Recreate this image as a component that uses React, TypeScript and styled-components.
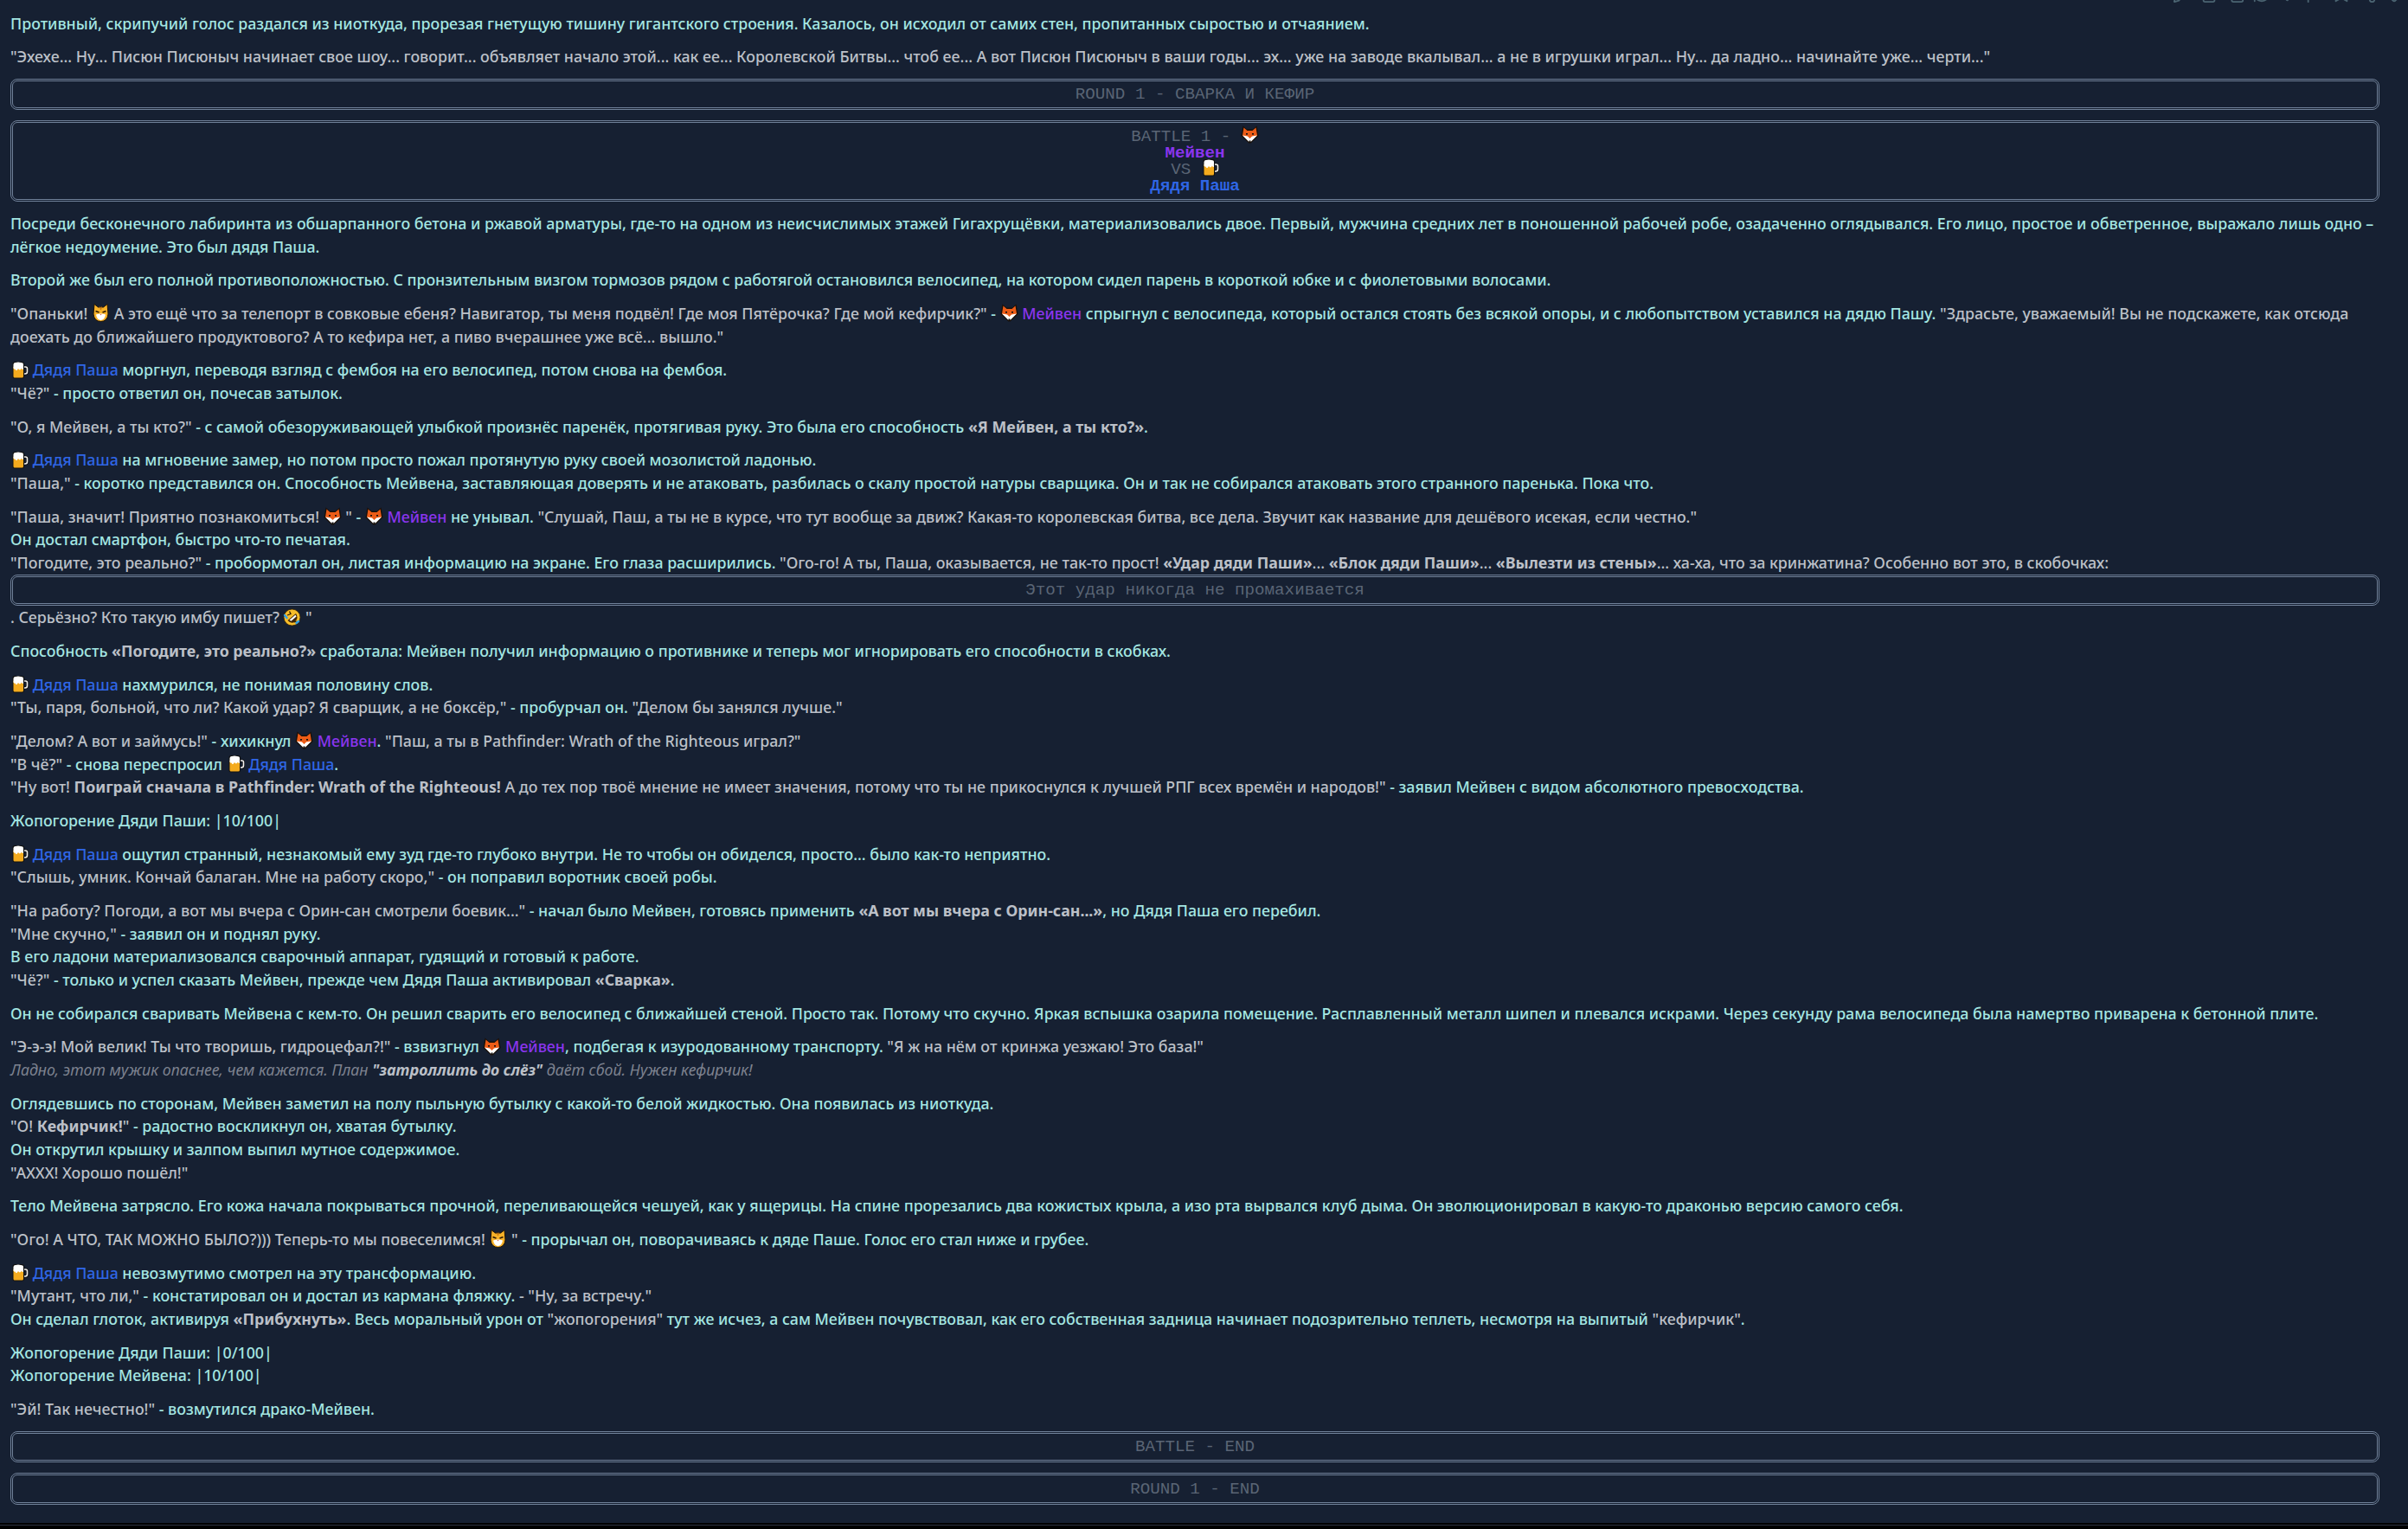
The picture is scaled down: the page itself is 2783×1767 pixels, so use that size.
import React from "react";
import styled, { createGlobalStyle } from "styled-components";
import { Reply, Pencil, Trash2, Copy, RefreshCw, Volume2, Flag, Bookmark, Share2, Heart } from "lucide-react";

const Global = createGlobalStyle`
  html, body { margin: 0; padding: 0; background: #000; }
  body { font-family: "Noto Sans", "Open Sans", sans-serif; }
`;

const Viewport = styled.div`
  height: 1767px;
  display: flex;
  flex-direction: column;
  overflow: hidden;
  background: #000;
`;
const Chat = styled.main`
  flex: 1;
  min-height: 0;
  overflow: hidden;
  background: #162032;
  padding: 0 33px 0 12px;
`;
const Foot = styled.footer`
  height: 7px;
  padding-top: 2px;
  box-sizing: border-box;
  &::before {
    content: "";
    display: block;
    height: 1px;
    background: #2c3240;
  }
`;
const MessageHead = styled.header`
  display: flex;
  justify-content: space-between;
  align-items: flex-end;
  height: 27px;
  margin: -23px -28px 9.6px 0;
  color: #a2e6e2;
`;
const Author = styled.div`
  font-weight: 700;
  font-size: 15px;
  line-height: 27px;
  span { font-weight: 400; font-size: 12px; color: #5d6b7c; margin-left: 7px; }
`;
const Tools = styled.div`
  display: flex;
  gap: 8.6px;
  color: #4b6472;
  svg { width: 22px; height: 22px; }
`;
const P = styled.p<{ $flush?: boolean }>`
  margin: 0 0 ${(p) => (p.$flush ? "0" : "12px")};
  font-size: 17.78px;
  line-height: 26.67px;
  font-weight: 500;
  color: #a4e6e2;
`;
const Q = styled.span`
  color: #bcc0c8;
`;
const Thought = styled.em`
  color: #7d828f;
  font-weight: 400;
  b { color: #bcc0c8; font-weight: 700; }
`;
const Name = styled.span<{ $who: "m" | "p" }>`
  color: ${(p) => (p.$who === "m" ? "#8a35ee" : "#2f66e6")};
`;
const Block = styled.div<{ $tight?: boolean }>`
  border: 3px double #708199;
  border-radius: 8px;
  margin: 0 0 ${(p) => (p.$tight ? "0" : "12px")};
  font-family: "Liberation Mono", monospace;
  font-size: 19.2px;
  line-height: 19px;
  color: #5a6575;
  text-align: center;
  padding: 6.5px 0 5px;
`;
const BattleLine = styled.div`
  height: 19px;
`;
const MonoName = styled.b<{ $who: "m" | "p" }>`
  color: ${(p) => (p.$who === "m" ? "#8a35ee" : "#2f66e6")};
`;
const EmojiBox = styled.svg`
  display: inline-block;
  width: 21px;
  height: 21px;
  margin-top: -6px;
  vertical-align: -3.5px;
`;

const Fox = () => (
  <EmojiBox viewBox="0 0 21 21">
    <path d="M2.5 0.5 L7 4.5 H14 L18.5 0.5 L20.5 12 L11.5 20.5 H9.5 L0.5 12 Z" fill="#1a1008" />
    <path d="M3.5 2.5 L7.5 6 H13.5 L17.5 2.5 L19 11.5 L10.5 18 L2 11.5 Z" fill="#ec5c17" />
    <path d="M2 11.5 L8 12.5 L10.5 15 L13 12.5 L19 11.5 L12 18.5 H9 Z" fill="#fff" />
    <path d="M9.3 17.5 H11.7 L10.5 20 Z" fill="#111" />
    <rect x="6" y="9" width="2" height="1.6" fill="#111" />
    <rect x="13" y="9" width="2" height="1.6" fill="#111" />
  </EmojiBox>
);
const Beer = () => (
  <EmojiBox viewBox="0 0 21 21">
    <path d="M14 7 H17.5 Q19.5 7 19.5 9 V12.5 Q19.5 15 17 15 H14" fill="none" stroke="#111" strokeWidth="3.2" />
    <path d="M14 7 H17.5 Q19.5 7 19.5 9 V12.5 Q19.5 15 17 15 H14" fill="none" stroke="#f1f1f1" strokeWidth="1.6" />
    <rect x="2.5" y="1" width="13.5" height="19.5" rx="2.5" fill="#111" />
    <rect x="3.5" y="6" width="11.5" height="13.5" rx="1.5" fill="#f4ab1e" />
    <path d="M3.5 4 Q4 1.8 6 2 Q9 0.8 12 2 Q15 2 15 4 V9.5 Q13.8 11 13 8.5 Q11 12 9 9 Q7 13 5.5 9.5 Q4 10 3.5 8.5 Z" fill="#fff" />
  </EmojiBox>
);
const Cat = () => (
  <EmojiBox viewBox="0 0 21 21">
    <path d="M3 0.5 L7.5 4 H13.5 L18 0.5 L19 12 Q18 20.5 10.5 20.5 Q3 20.5 2 12 Z" fill="#f6b128" stroke="#1d1205" strokeWidth="1" />
    <path d="M5 12.5 Q10.5 10.5 16 12.5 Q15 18.5 10.5 19 Q6 18.5 5 12.5 Z" fill="#fff" />
    <path d="M4.5 8.5 L8.5 10 M16.5 8.5 L12.5 10" stroke="#2d1a03" strokeWidth="1.7" />
    <path d="M9.5 12 H11.5 L10.5 13.5 Z" fill="#e0644a" />
    <path d="M9.5 3.5 L10.5 7 L11.5 3.5" stroke="#c9760f" strokeWidth="1" fill="none" />
  </EmojiBox>
);
const Rofl = () => (
  <EmojiBox viewBox="0 0 21 21">
    <circle cx="10.5" cy="10.5" r="9.5" fill="#f7bd2a" stroke="#3a2605" strokeWidth=".8" />
    <path d="M5.5 14 L15 6 Q18.5 11 14 15.5 Q9.5 18.5 5.5 14 Z" fill="#3e2405" />
    <path d="M7.5 13.5 L14.5 7.5 L15.5 9.5 L9.5 14.8 Z" fill="#fff" />
    <path d="M5 8 L9 6.5 L7.5 3.5 M13 16 L16 15" stroke="#2d1a03" strokeWidth="1.3" fill="none" />
    <path d="M2 8 L4.5 11 M15.5 17 L18 15" stroke="#2f9fe8" strokeWidth="2.4" strokeLinecap="round" />
  </EmojiBox>
);

const M = () => (<><Fox /> <Name $who="m">Мейвен</Name></>);
const D = () => (<><Beer /> <Name $who="p">Дядя Паша</Name></>);

export default function App() {
  return (
    <Viewport>
      <Global />
      <Chat>
        <MessageHead>
          <Author>PET Arena<span>July 14, 2025 2:10 PM</span></Author>
          <Tools>
            <Reply /><Pencil /><Trash2 /><Copy /><RefreshCw /><Volume2 /><Flag /><Bookmark /><Share2 /><Heart />
          </Tools>
        </MessageHead>
        <P>Противный, скрипучий голос раздался из ниоткуда, прорезая гнетущую тишину гигантского строения. Казалось, он исходил от самих стен, пропитанных сыростью и отчаянием.</P>
        <P><Q>"Эхехе... Ну... Писюн Писюныч начинает свое шоу... говорит... объявляет начало этой... как ее... Королевской Битвы... чтоб ее... А вот Писюн Писюныч в ваши годы... эх... уже на заводе вкалывал... а не в игрушки играл... Ну... да ладно... начинайте уже... черти..."</Q></P>
        <Block>ROUND 1 - СВАРКА И КЕФИР</Block>
        <Block>
          <BattleLine>BATTLE 1 - <Fox /></BattleLine>
          <BattleLine><MonoName $who="m">Мейвен</MonoName></BattleLine>
          <BattleLine>VS <Beer /></BattleLine>
          <BattleLine><MonoName $who="p">Дядя Паша</MonoName></BattleLine>
        </Block>
        <P>Посреди бесконечного лабиринта из обшарпанного бетона и ржавой арматуры, где-то на одном из неисчислимых этажей Гигахрущёвки, материализовались двое. Первый, мужчина средних лет в поношенной рабочей робе, озадаченно оглядывался. Его лицо, простое и обветренное, выражало лишь одно – лёгкое недоумение. Это был дядя Паша.</P>
        <P>Второй же был его полной противоположностью. С пронзительным визгом тормозов рядом с работягой остановился велосипед, на котором сидел парень в короткой юбке и с фиолетовыми волосами.</P>
        <P><Q>"Опаньки! <Cat /> А это ещё что за телепорт в совковые ебеня? Навигатор, ты меня подвёл! Где моя Пятёрочка? Где мой кефирчик?"</Q> - <M /> спрыгнул с велосипеда, который остался стоять без всякой опоры, и с любопытством уставился на дядю Пашу. <Q>"Здрасьте, уважаемый! Вы не подскажете, как отсюда доехать до ближайшего продуктового? А то кефира нет, а пиво вчерашнее уже всё... вышло."</Q></P>
        <P><D /> моргнул, переводя взгляд с фембоя на его велосипед, потом снова на фембоя.<br /><Q>"Чё?"</Q> - просто ответил он, почесав затылок.</P>
        <P><Q>"О, я Мейвен, а ты кто?"</Q> - с самой обезоруживающей улыбкой произнёс паренёк, протягивая руку. Это была его способность <Q><b>«Я Мейвен, а ты кто?»</b></Q>.</P>
        <P><D /> на мгновение замер, но потом просто пожал протянутую руку своей мозолистой ладонью.<br /><Q>"Паша,"</Q> - коротко представился он. Способность Мейвена, заставляющая доверять и не атаковать, разбилась о скалу простой натуры сварщика. Он и так не собирался атаковать этого странного паренька. Пока что.</P>
        <P $flush><Q>"Паша, значит! Приятно познакомиться! <Fox /> "</Q> - <M /> не унывал. <Q>"Слушай, Паш, а ты не в курсе, что тут вообще за движ? Какая-то королевская битва, все дела. Звучит как название для дешёвого исекая, если честно."</Q><br />Он достал смартфон, быстро что-то печатая.<br /><Q>"Погодите, это реально?"</Q> - пробормотал он, листая информацию на экране. Его глаза расширились. <Q>"Ого-го! А ты, Паша, оказывается, не так-то прост! <b>«Удар дяди Паши»</b>... <b>«Блок дяди Паши»</b>... <b>«Вылезти из стены»</b>... ха-ха, что за кринжатина? Особенно вот это, в скобочках:</Q></P>
        <Block $tight>Этот удар никогда не промахивается</Block>
        <P><Q>. Серьёзно? Кто такую имбу пишет? <Rofl /> "</Q></P>
        <P>Способность <Q><b>«Погодите, это реально?»</b></Q> сработала: Мейвен получил информацию о противнике и теперь мог игнорировать его способности в скобках.</P>
        <P><D /> нахмурился, не понимая половину слов.<br /><Q>"Ты, паря, больной, что ли? Какой удар? Я сварщик, а не боксёр,"</Q> - пробурчал он. <Q>"Делом бы занялся лучше."</Q></P>
        <P><Q>"Делом? А вот и займусь!"</Q> - хихикнул <M />. <Q>"Паш, а ты в Pathfinder: Wrath of the Righteous играл?"</Q><br /><Q>"В чё?"</Q> - снова переспросил <D />.<br /><Q>"Ну вот! <b>Поиграй сначала в Pathfinder: Wrath of the Righteous!</b> А до тех пор твоё мнение не имеет значения, потому что ты не прикоснулся к лучшей РПГ всех времён и народов!"</Q> - заявил Мейвен с видом абсолютного превосходства.</P>
        <P>Жопогорение Дяди Паши: |10/100|</P>
        <P><D /> ощутил странный, незнакомый ему зуд где-то глубоко внутри. Не то чтобы он обиделся, просто... было как-то неприятно.<br /><Q>"Слышь, умник. Кончай балаган. Мне на работу скоро,"</Q> - он поправил воротник своей робы.</P>
        <P><Q>"На работу? Погоди, а вот мы вчера с Орин-сан смотрели боевик..."</Q> - начал было Мейвен, готовясь применить <Q><b>«А вот мы вчера с Орин-сан...»</b></Q>, но Дядя Паша его перебил.<br /><Q>"Мне скучно,"</Q> - заявил он и поднял руку.<br />В его ладони материализовался сварочный аппарат, гудящий и готовый к работе.<br /><Q>"Чё?"</Q> - только и успел сказать Мейвен, прежде чем Дядя Паша активировал <Q><b>«Сварка»</b></Q>.</P>
        <P>Он не собирался сваривать Мейвена с кем-то. Он решил сварить его велосипед с ближайшей стеной. Просто так. Потому что скучно. Яркая вспышка озарила помещение. Расплавленный металл шипел и плевался искрами. Через секунду рама велосипеда была намертво приварена к бетонной плите.</P>
        <P><Q>"Э-э-э! Мой велик! Ты что творишь, гидроцефал?!"</Q> - взвизгнул <M />, подбегая к изуродованному транспорту. <Q>"Я ж на нём от кринжа уезжаю! Это база!"</Q><br /><Thought>Ладно, этот мужик опаснее, чем кажется. План <b>"затроллить до слёз"</b> даёт сбой. Нужен кефирчик!</Thought></P>
        <P>Оглядевшись по сторонам, Мейвен заметил на полу пыльную бутылку с какой-то белой жидкостью. Она появилась из ниоткуда.<br /><Q>"О! <b>Кефирчик!</b>"</Q> - радостно воскликнул он, хватая бутылку.<br />Он открутил крышку и залпом выпил мутное содержимое.<br /><Q>"АХХХ! Хорошо пошёл!"</Q></P>
        <P>Тело Мейвена затрясло. Его кожа начала покрываться прочной, переливающейся чешуей, как у ящерицы. На спине прорезались два кожистых крыла, а изо рта вырвался клуб дыма. Он эволюционировал в какую-то драконью версию самого себя.</P>
        <P><Q>"Ого! А ЧТО, ТАК МОЖНО БЫЛО?))) Теперь-то мы повеселимся! <Cat /> "</Q> - прорычал он, поворачиваясь к дяде Паше. Голос его стал ниже и грубее.</P>
        <P><D /> невозмутимо смотрел на эту трансформацию.<br /><Q>"Мутант, что ли,"</Q> - констатировал он и достал из кармана фляжку. <Q>- "Ну, за встречу."</Q><br />Он сделал глоток, активируя <Q><b>«Прибухнуть»</b></Q>. Весь моральный урон от <Q>"жопогорения"</Q> тут же исчез, а сам Мейвен почувствовал, как его собственная задница начинает подозрительно теплеть, несмотря на выпитый <Q>"кефирчик"</Q>.</P>
        <P>Жопогорение Дяди Паши: |0/100|<br />Жопогорение Мейвена: |10/100|</P>
        <P><Q>"Эй! Так нечестно!"</Q> - возмутился драко-Мейвен.</P>
        <Block>BATTLE - END</Block>
        <Block>ROUND 1 - END</Block>
      </Chat>
      <Foot />
    </Viewport>
  );
}
